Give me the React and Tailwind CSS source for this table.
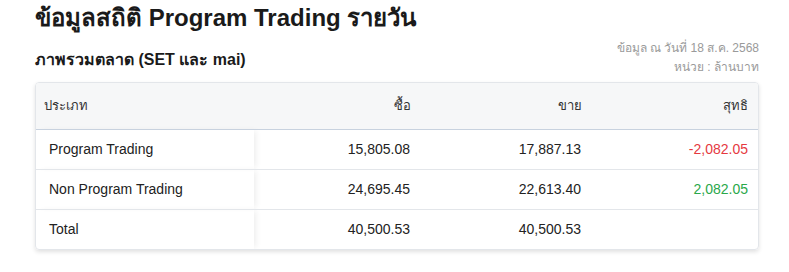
export default function App() {
  const rows = [
    { name: "Program Trading", buy: "15,805.08", sell: "17,887.13", net: "-2,082.05", c: "text-[#e5393f]" },
    { name: "Non Program Trading", buy: "24,695.45", sell: "22,613.40", net: "2,082.05", c: "text-[#2aa84a]" },
    { name: "Total", buy: "40,500.53", sell: "40,500.53", net: "", c: "" },
  ];
  const font = { fontFamily: '"Liberation Sans", "Noto Sans", Tahoma, sans-serif' };
  return (
    <div className="w-[789px] h-[272px] bg-white text-[#1a1a1a]" style={font}>
      <div className="ml-[35px] w-[724px] pt-[2px]">
        <h1 className="text-[24px] leading-[32px] font-bold">ข้อมูลสถิติ Program Trading รายวัน</h1>
        <div className="flex items-end justify-between mt-[5px]">
          <h2 className="text-[16px] leading-[24px] font-bold mb-[5px]">ภาพรวมตลาด (SET และ mai)</h2>
          <div className="text-right text-[12px] text-[#9a9a9a]">
            <div className="h-[19px] leading-[19px]">ข้อมูล ณ วันที่ 18 ส.ค. 2568</div>
            <div className="h-[19px] leading-[19px]">หน่วย : ล้านบาท</div>
          </div>
        </div>
        <div className="mt-[5px] rounded-[4px] border border-[#e3e6ea] shadow-[0_2px_4px_rgba(0,0,0,0.12)] overflow-hidden">
          <table className="w-full border-collapse text-[14px] text-[#222]">
            <colgroup>
              <col className="w-[218px]" />
              <col className="w-[172px]" />
              <col className="w-[170px]" />
              <col />
            </colgroup>
            <thead>
              <tr className="h-[46px] bg-[#f6f7f8] border-b border-[#c8d2df] text-[#333] text-[13px]">
                <th className="relative text-left font-normal pl-[8px] shadow-[4px_0_6px_-2px_rgba(0,0,0,0.07)]">ประเภท</th>
                <th className="text-right font-normal pr-[15px]">ซื้อ</th>
                <th className="text-right font-normal pr-[14px]">ขาย</th>
                <th className="text-right font-normal pr-[10px]">สุทธิ</th>
              </tr>
            </thead>
            <tbody>
              {rows.map((r, i) => (
                <tr key={r.name} className={`h-[40px] ${i > 0 ? "border-t border-[#e3e6ea]" : ""}`}>
                  <td className="pl-[13px] shadow-[4px_0_6px_-2px_rgba(0,0,0,0.07)]">{r.name}</td>
                  <td className="text-right pr-[16px]">{r.buy}</td>
                  <td className="text-right pr-[15px]">{r.sell}</td>
                  <td className={`text-right pr-[10px] ${r.c}`}>{r.net}</td>
                </tr>
              ))}
            </tbody>
          </table>
        </div>
      </div>
    </div>
  );
}
